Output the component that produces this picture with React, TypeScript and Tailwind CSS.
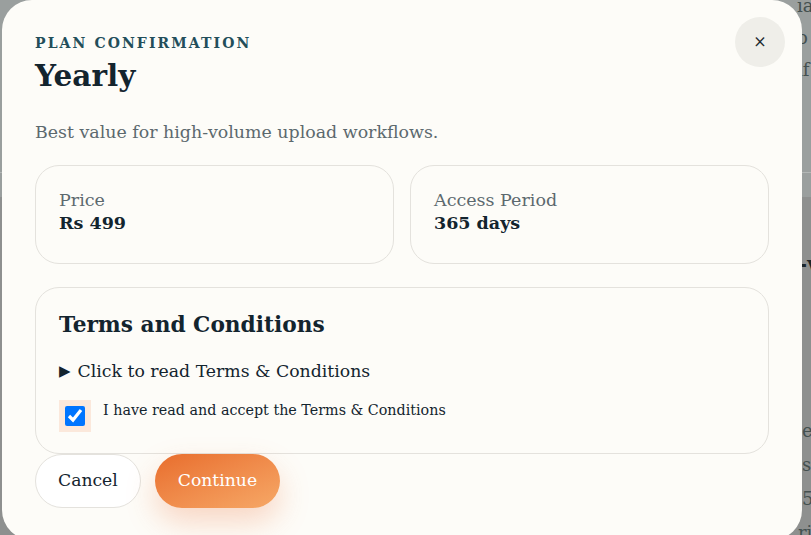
import React, { useState } from 'react';

const serif = { fontFamily: '"DejaVu Serif", "Liberation Serif", serif' };

const App: React.FC = () => {
    const [accepted, setAccepted] = useState(true);

    return (
        <div className="relative w-[811px] h-[535px] overflow-hidden bg-[#9a9f9e]" style={serif}>
            {/* page behind the overlay */}
            <div className="absolute inset-0 text-[#44504f] text-[18px] whitespace-nowrap">
                <div className="absolute left-[797px] top-[-10px] leading-[32px]">
                    <div>ias</div>
                    <div>o c</div>
                    <div>if</div>
                </div>
                <div className="absolute left-0 right-0 top-[172px] h-px bg-[#b3b7b6]" />
                <div className="absolute left-0 right-0 top-[197px] bottom-0 bg-[#8e908f]" />
                <div className="absolute left-[798px] top-[248px] font-bold text-[22px] text-[#1c2528]">-v</div>
                <div className="absolute left-[802px] top-[414px] leading-[34px]">
                    <div>e</div>
                    <div>s.</div>
                    <div>5</div>
                    <div className="ml-[-4px]">rif</div>
                </div>
            </div>

            {/* modal */}
            <div className="absolute left-[2px] top-0 w-[800px] h-[540px] rounded-[30px] bg-[#fdfcf8] px-[33px] pt-[33px] flex flex-col">
                <button className="absolute right-[17px] top-[17px] w-[50px] h-[50px] rounded-full bg-[#efeee9] flex items-center justify-center text-[#1d2a30] text-[16px] leading-none">
                    ×
                </button>

                <p className="text-[14px] font-bold uppercase tracking-[0.15em] text-[#234e5a] leading-[20px]">
                    Plan Confirmation
                </p>
                <h2 className="mt-[3px] text-[29.5px] font-bold text-[#13242e] leading-[40px]">Yearly</h2>
                <p className="mt-[22px] text-[17.4px] text-[#5c696e] leading-[28px]">
                    Best value for high-volume upload workflows.
                </p>

                <div className="mt-[19px] grid grid-cols-2 gap-4">
                    <div className="h-[99px] rounded-[24px] border border-[#e4e2dd] px-[23px] pt-[22px]">
                        <p className="text-[17.5px] text-[#5c696e] leading-[24px]">Price</p>
                        <p className="text-[17.5px] font-bold text-[#13242e] leading-[22px]">Rs 499</p>
                    </div>
                    <div className="h-[99px] rounded-[24px] border border-[#e4e2dd] px-[23px] pt-[22px]">
                        <p className="text-[17.5px] text-[#5c696e] leading-[24px]">Access Period</p>
                        <p className="text-[17.5px] font-bold text-[#13242e] leading-[22px]">365 days</p>
                    </div>
                </div>

                <div className="mt-[23px] h-[167px] rounded-[24px] border border-[#e4e2dd] px-[23px] pt-[22px]">
                    <h3 className="text-[21.7px] font-bold text-[#13242e] leading-[30px]">Terms and Conditions</h3>
                    <div className="mt-[17px] flex items-center gap-[7px] text-[17.3px] text-[#13242e] leading-[28px]">
                        <span className="text-[15px] leading-none">▶</span>
                        <span>Click to read Terms &amp; Conditions</span>
                    </div>
                    <label className="mt-[15px] flex items-start gap-[12px] text-[#13242e]">
                        <span className="bg-[#fbe8db] p-[6px] flex">
                            <input
                                type="checkbox"
                                checked={accepted}
                                onChange={(e) => setAccepted(e.target.checked)}
                                className="w-5 h-5 m-0 accent-[#0075ff]"
                            />
                        </span>
                        <span className="text-[14.3px] leading-[20px]">
                            I have read and accept the Terms &amp; Conditions
                        </span>
                    </label>
                </div>

                <div className="flex gap-[14px]">
                    <button className="h-[54px] px-[22px] rounded-full border border-[#e4e2dd] bg-white text-[17.2px] text-[#13242e]">
                        Cancel
                    </button>
                    <button className="h-[54px] px-[23px] rounded-full bg-gradient-to-br from-[#e86d2c] to-[#f6a866] text-[17.2px] text-white shadow-[0_14px_30px_rgba(236,120,60,0.28)]">
                        Continue
                    </button>
                </div>
            </div>
        </div>
    );
};

export default App;
